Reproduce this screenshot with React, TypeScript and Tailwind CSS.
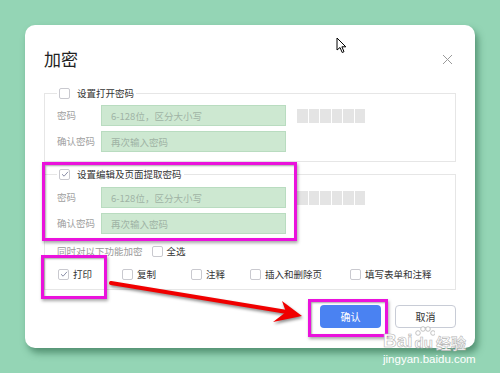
const font = { fontFamily: '"Noto Sans CJK SC", "Noto Sans", sans-serif' }

function Box({ checked }: { checked?: boolean }) {
  return (
    <span className="w-[11px] h-[11px] rounded-[2px] border border-[#c9c9cf] bg-white flex items-center justify-center shrink-0">
      {checked && (
        <svg width="8" height="8" viewBox="0 0 8 8">
          <path d="M1 4.2 L3.1 6.2 L7 1.8" fill="none" stroke="#8b8fa8" strokeWidth="1" />
        </svg>
      )}
    </span>
  )
}

function Strength() {
  return (
    <div className="ml-[11px] flex gap-px">
      {[0, 1, 2, 3, 4, 5].map((i) => (
        <span key={i} className="w-[10.5px] h-[14px] bg-[#e4e4e4]" />
      ))}
    </div>
  )
}

function Row({
  label,
  hint,
  strength,
}: {
  label: string
  hint: string
  strength?: boolean
}) {
  return (
    <div className="flex items-center h-[21px]">
      <span className="w-[44px] text-[9.5px] text-[#a0a0a0]">{label}</span>
      <input
        className="w-[185px] h-[21px] bg-[#cde8d1] border border-[#b9dcc0] pl-[9px] text-[9.5px] outline-none placeholder:text-[#9fb3a5]"
        placeholder={hint}
      />
      {strength && <Strength />}
    </div>
  )
}

function Option({ text, w, checked }: { text: string; w: string; checked?: boolean }) {
  return (
    <div className={`flex items-center gap-[4px] ${w}`}>
      <Box checked={checked} />
      <span className="text-[9.5px] text-[#333]">{text}</span>
    </div>
  )
}

export default function App() {
  return (
    <div
      className="relative w-[500px] h-[373px] overflow-hidden bg-[#94d5b5] pt-[25px] pl-[25px]"
      style={font}
    >
      <div className="w-[450px] h-[323px] bg-white rounded-[10px] px-[19px] pt-[22px] shadow-[3px_5px_7px_rgba(20,80,50,0.5)]">
        <div className="flex items-center justify-between h-[24px]">
          <span className="text-[17px] text-[#222]">加密</span>
          <svg width="11" height="11" viewBox="0 0 11 11" className="mr-[3px]">
            <path d="M1 1 L10 10 M10 1 L1 10" stroke="#9a9a9a" strokeWidth="1" />
          </svg>
        </div>

        <fieldset className="mt-[16px] border border-[#e6e6e6] px-[12px] pt-[6px] pb-[9px]">
          <legend className="h-[12px] px-[2px] flex items-center gap-[7px]">
            <Box />
            <span className="text-[9.5px] text-[#333]">设置打开密码</span>
          </legend>
          <div className="flex flex-col gap-[5px]">
            <Row label="密码" hint="6-128位，区分大小写" strength />
            <Row label="确认密码" hint="再次输入密码" />
          </div>
        </fieldset>

        <fieldset className="mt-[6px] border border-[#e6e6e6] px-[12px] pt-[7px] pb-[8px]">
          <legend className="h-[12px] px-[2px] flex items-center gap-[7px]">
            <Box checked />
            <span className="text-[9.5px] text-[#333]">设置编辑及页面提取密码</span>
          </legend>
          <div className="flex flex-col gap-[5px]">
            <Row label="密码" hint="6-128位，区分大小写" strength />
            <Row label="确认密码" hint="再次输入密码" />
          </div>
          <div className="mt-[10px] h-[14px] flex items-center gap-[9px]">
            <span className="text-[9.5px] text-[#999]">同时对以下功能加密</span>
            <Option text="全选" w="" />
          </div>
          <div className="mt-[9px] h-[14px] flex items-center pl-px">
            <Option text="打印" w="w-[64px]" checked />
            <Option text="复制" w="w-[69px]" />
            <Option text="注释" w="w-[59px]" />
            <Option text="插入和删除页" w="w-[100px]" />
            <Option text="填写表单和注释" w="" />
          </div>
        </fieldset>

        <div className="mt-[15px] flex justify-end gap-[14px]">
          <button className="w-[61px] h-[23px] rounded-[4px] bg-[#4a82f2] text-white text-[10px]">
            确认
          </button>
          <button className="w-[61px] h-[23px] rounded-[4px] border border-[#c8ccd6] bg-white text-[#333] text-[10px]">
            取消
          </button>
        </div>
      </div>

      {/* annotation frames */}
      <div className="absolute left-[42px] top-[162px] w-[255px] h-[79px] border-[3px] border-[#ea12dc] shadow-[1px_2px_3px_rgba(0,0,0,0.35),inset_1px_1px_2px_rgba(0,0,0,0.35)]" />
      <div className="absolute left-[41px] top-[255px] w-[66px] h-[44px] border-[3px] border-[#ea12dc] shadow-[1px_2px_3px_rgba(0,0,0,0.35),inset_1px_1px_2px_rgba(0,0,0,0.35)]" />
      <div className="absolute left-[308px] top-[299px] w-[80px] h-[38px] border-[3px] border-[#ea12dc] shadow-[1px_2px_3px_rgba(0,0,0,0.35),inset_1px_1px_2px_rgba(0,0,0,0.35)]" />

      {/* red arrow */}
      <svg
        className="absolute left-[100px] top-[270px]"
        width="210"
        height="60"
        viewBox="100 270 210 60"
      >
        <g style={{ filter: 'drop-shadow(1px 2px 1.5px rgba(0,0,0,0.45))' }}>
          <path d="M111 283 L287 312" stroke="#f00000" strokeWidth="4" strokeLinecap="round" />
          <polygon points="302,316 282,301 286,312 273,322" fill="#f00000" />
        </g>
      </svg>

      {/* mouse cursor */}
      <svg className="absolute left-[336px] top-[37px]" width="11" height="17" viewBox="0 0 11 17">
        <path d="M1 1 L1 13 L4 10.5 L6.2 15.5 L8 14.7 L5.9 9.8 L9.8 9.8 Z" fill="white" stroke="black" strokeWidth="1" />
      </svg>

      {/* watermark */}
      <div className="absolute left-[383px] top-[328px] flex flex-col items-start text-white">
        <div className="flex items-end h-[22px] leading-none [-webkit-text-stroke:0.6px_#b5b5b5]">
          <span className="text-[19px] font-bold" style={{ fontFamily: '"Liberation Sans", sans-serif' }}>
            Bai
          </span>
          <span className="relative text-[15px] font-bold ml-[2px]" style={{ fontFamily: '"Liberation Sans", sans-serif' }}>
            <svg className="absolute left-[0px] -top-[9px]" width="20" height="10" viewBox="0 0 20 10">
              <circle cx="3" cy="7" r="2.3" fill="white" stroke="#b5b5b5" strokeWidth="0.8" />
              <circle cx="8" cy="3" r="2.3" fill="white" stroke="#b5b5b5" strokeWidth="0.8" />
              <circle cx="13" cy="3" r="2.3" fill="white" stroke="#b5b5b5" strokeWidth="0.8" />
              <circle cx="18" cy="7" r="2.3" fill="white" stroke="#b5b5b5" strokeWidth="0.8" />
            </svg>
            du
          </span>
          <span className="text-[15px] font-bold ml-[3px]">经验</span>
        </div>
        <span className="mt-[3px] text-[11.5px] leading-[13px]" style={{ fontFamily: '"Liberation Sans", sans-serif' }}>
          jingyan.baidu.com
        </span>
      </div>
    </div>
  )
}
